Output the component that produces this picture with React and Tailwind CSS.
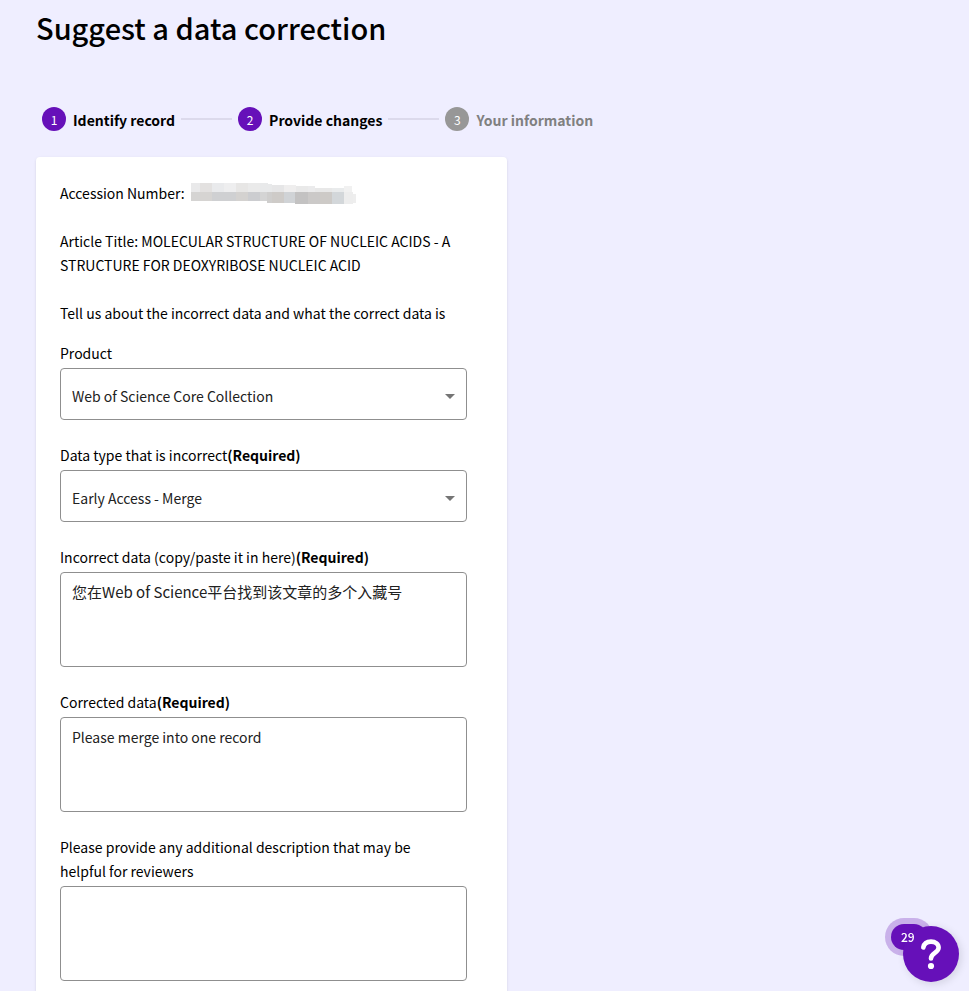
import React, { useState } from 'react';

const steps = [
  { label: 'Identify record', active: true },
  { label: 'Provide changes', active: true },
  { label: 'Your information', active: false },
];

// mosaic cells hiding the accession number: [x, y, width, height, colour]
const mosaic = [
  [0, 0, 9, 9, '#e9e9ea'], [9, 0, 12, 9, '#e3e1e0'], [21, 0, 12, 9, '#e9eaec'],
  [33, 0, 12, 9, '#eeeeef'], [45, 0, 12, 9, '#e7e6e5'], [57, 0, 12, 9, '#eaeaea'],
  [69, 0, 8, 9, '#e8e9ea'], [77, 1, 4, 8, '#e8e9ea'], [81, 2, 12, 7, '#e6e6e7'],
  [93, 2, 12, 7, '#efeeee'], [105, 3, 12, 6, '#e9e9e9'], [117, 3, 7, 6, '#ebebec'],
  [124, 5, 17, 4, '#e8e8e8'], [141, 5, 12, 4, '#e9ebec'], [153, 3, 8, 6, '#f1f1f1'],
  [0, 9, 9, 9, '#d5d4d3'], [9, 9, 12, 9, '#d6d4d2'], [21, 9, 24, 9, '#cfd0d2'],
  [45, 9, 12, 9, '#d4d2d0'], [57, 9, 12, 9, '#cccdd0'], [69, 9, 7, 9, '#d4d4d4'],
  [76, 9, 5, 11, '#cfcecd'], [81, 9, 12, 11, '#cecbc8'], [93, 9, 11, 11, '#d0d3d6'],
  [104, 9, 13, 12, '#c3c2c2'], [117, 9, 12, 12, '#cbc9c8'], [129, 9, 12, 12, '#cdcac7'],
  [141, 9, 12, 12, '#d3d7da'], [153, 9, 9, 12, '#ededed'], [162, 11, 3, 9, '#eeeeee'],
];

function Stepper() {
  return (
    <ol className="flex items-center px-1.5">
      {steps.map((step, index) => (
        <li key={step.label} className="flex items-center">
          {index > 0 && <span className="mx-1.5 h-0.5 w-[51px] bg-[#dcdaec]" />}
          <span
            className={`flex size-6 items-center justify-center rounded-full pt-0.5 text-xs text-white ${
              step.active ? 'bg-[#6610b9]' : 'bg-[#979797]'
            }`}
          >
            {index + 1}
          </span>
          <span
            className={`ml-[7px] pt-0.5 font-semibold ${
              step.active ? 'text-black' : 'text-[#808080]'
            }`}
          >
            {step.label}
          </span>
        </li>
      ))}
    </ol>
  );
}

function FieldLabel({ id, text, required }) {
  return (
    <label htmlFor={id} className="mb-[3px] block pr-4">
      {text}
      {required && <b className="font-semibold">(Required)</b>}
    </label>
  );
}

function SelectField({ id, text, required, options }) {
  return (
    <div>
      <FieldLabel id={id} text={text} required={required} />
      <div className="relative">
        <select
          id={id}
          className="block h-[52px] w-full appearance-none rounded border border-[#8f8f8f] bg-white px-[11px] pt-1 text-[#212121]"
        >
          {options.map((option) => (
            <option key={option}>{option}</option>
          ))}
        </select>
        <svg
          className="pointer-events-none absolute top-1/2 right-3 h-[5px] w-2.5"
          viewBox="0 0 10 5"
          aria-hidden="true"
        >
          <path d="M0 0h10L5 5z" fill="#757575" />
        </svg>
      </div>
    </div>
  );
}

function TextField({ id, text, required, initialValue = '', textSize = 'text-sm' }) {
  const [value, setValue] = useState(initialValue);

  return (
    <div>
      <FieldLabel id={id} text={text} required={required} />
      <textarea
        id={id}
        value={value}
        onChange={(event) => setValue(event.target.value)}
        className={`block h-[95px] w-full resize-none rounded border border-[#8f8f8f] bg-white px-[11px] py-[7px] leading-6 text-[#212121] ${textSize}`}
      />
    </div>
  );
}

function HelpButton() {
  return (
    <button type="button" aria-label="Help" className="fixed right-2.5 bottom-[9px] size-14 text-white">
      <span className="absolute -top-0.5 -left-3 h-[26px] w-9 rounded-full bg-[#6610b9] ring-6 ring-[#c9b1ea]" />
      <span className="absolute inset-0 flex items-center justify-center rounded-full bg-[#6610b9] shadow-[2px_2px_8px_rgba(0,0,0,0.12)]">
        <svg className="h-8 w-6" viewBox="0 0 24 32" fill="none" aria-hidden="true">
          <path
            d="M4.300 9.500C5 5.800 8 3.600 12 3.600c4.400 0 7.600 2.400 7.600 6.200 0 5-7.600 5.400-7.600 10.700"
            stroke="#fff"
            strokeWidth="4.600"
            strokeLinecap="round"
          />
          <circle cx="12" cy="28" r="3.100" fill="#fff" />
        </svg>
      </span>
      <span className="absolute -top-0.5 -left-3 flex h-[26px] items-center pl-2.5 text-xs font-medium">29</span>
    </button>
  );
}

function App() {
  return (
    <main className="h-screen overflow-hidden bg-[#efeeff] px-9 pt-[5px] font-['Noto_Sans_CJK_SC',sans-serif] text-sm leading-6 text-black">
      <h1 className="mb-[57px] text-[29px] leading-11 font-medium">Suggest a data correction</h1>
      <Stepper />
      <form className="mt-[25px] max-w-[471px] rounded bg-white pt-6 pr-10 pb-10 pl-6 shadow-sm">
        <p className="flex h-6 items-center gap-1.5">
          Accession Number:
          <svg className="h-[21px] w-[165px]" viewBox="0 0 165 21" shapeRendering="crispEdges" aria-hidden="true">
            {mosaic.map(([x, y, width, height, fill]) => (
              <rect key={`${x}-${y}`} x={x} y={y} width={width} height={height} fill={fill} />
            ))}
          </svg>
        </p>
        <p className="mt-6">
          Article Title: MOLECULAR STRUCTURE OF NUCLEIC ACIDS - A STRUCTURE FOR DEOXYRIBOSE NUCLEIC ACID
        </p>
        <p className="mt-6 mb-4">Tell us about the incorrect data and what the correct data is</p>
        <div className="flex flex-col gap-[23px]">
          <SelectField id="product" text="Product" options={['Web of Science Core Collection']} />
          <SelectField id="data-type" text="Data type that is incorrect" required options={['Early Access - Merge']} />
          <TextField
            id="incorrect-data"
            text="Incorrect data (copy/paste it in here)"
            required
            initialValue="您在Web of Science平台找到该文章的多个入藏号"
            textSize="text-[15px]"
          />
          <TextField
            id="corrected-data"
            text="Corrected data"
            required
            initialValue="Please merge into one record"
          />
          <TextField
            id="description"
            text="Please provide any additional description that may be helpful for reviewers"
          />
        </div>
      </form>
      <HelpButton />
    </main>
  );
}

export default App;
